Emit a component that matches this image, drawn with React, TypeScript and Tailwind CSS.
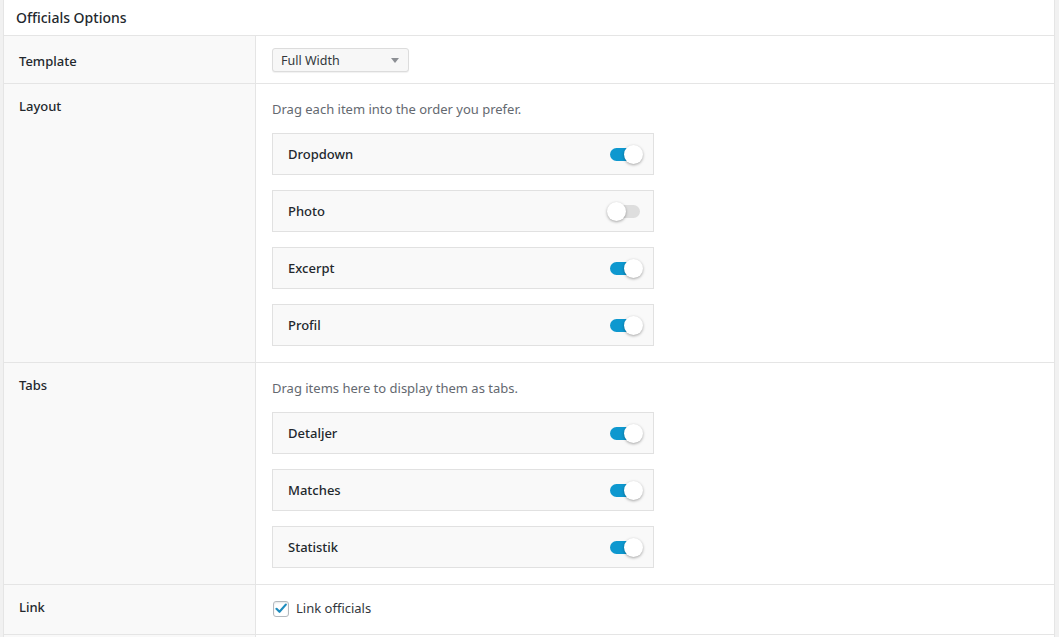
import React from "react";

type Item = { label: string; on: boolean };

const layoutItems: Item[] = [
  { label: "Dropdown", on: true },
  { label: "Photo", on: false },
  { label: "Excerpt", on: true },
  { label: "Profil", on: true },
];

const tabItems: Item[] = [
  { label: "Detaljer", on: true },
  { label: "Matches", on: true },
  { label: "Statistik", on: true },
];

function Toggle({ on }: { on: boolean }) {
  return (
    <div className="relative h-[18px] w-[34px]">
      <div
        className={
          on
            ? "absolute left-[1px] top-[3px] h-[13px] w-[30px] rounded-full bg-[#0e98cf]"
            : "absolute left-[1px] top-[3px] h-[13px] w-[30px] rounded-full bg-[#dedede]"
        }
      />
      <div
        className={
          on
            ? "absolute right-0 top-0 h-[19px] w-[19px] rounded-full bg-white shadow-[0_1px_3px_rgba(0,0,0,0.35)]"
            : "absolute left-[-2px] top-0 h-[19px] w-[19px] rounded-full bg-white shadow-[0_1px_3px_rgba(0,0,0,0.35)]"
        }
      />
    </div>
  );
}

function SortItem({ item }: { item: Item }) {
  return (
    <div className="flex h-[42px] w-[382px] items-center justify-between border border-[#e1e1e1] bg-[#f9f9f9] pl-[15px] pr-[10px]">
      <span className="pt-[1px] text-[13px] font-medium text-[#23282d]">{item.label}</span>
      <Toggle on={item.on} />
    </div>
  );
}

function Label({ children }: { children: React.ReactNode }) {
  return <span className="text-[13px] font-medium leading-5 text-[#23282d]">{children}</span>;
}

function SortableRow({ label, hint, items }: { label: string; hint: string; items: Item[] }) {
  return (
    <div className="flex border-b border-[#e5e5e5]">
      <div className="w-[252px] shrink-0 border-r border-[#e5e5e5] bg-[#f9f9f9] pl-[15px] pt-[9px]">
        <Label>{label}</Label>
      </div>
      <div className="flex-1 bg-white pb-[16px] pl-[16px] pt-[15px]">
        <p className="mb-[14px] text-[13px] leading-5 text-[#646970]">{hint}</p>
        <div className="flex flex-col gap-[15px]">
          {items.map((it) => (
            <SortItem key={it.label} item={it} />
          ))}
        </div>
      </div>
    </div>
  );
}

export default function App() {
  return (
    <div
      className="h-[637px] w-[1059px] overflow-hidden bg-[#f1f1f1] pl-[3px] pr-[4px]"
      style={{ fontFamily: '"Noto Sans", "Open Sans", Arial, sans-serif' }}
    >
      <div className="border-x border-[#e5e5e5] bg-white">
        {/* header */}
        <div className="flex h-[36px] items-center border-b border-[#e5e5e5] pl-[12px]">
          <h2 className="text-[14px] font-medium text-[#23282d]">Officials Options</h2>
        </div>

        {/* template */}
        <div className="flex h-[48px] border-b border-[#e5e5e5]">
          <div className="flex w-[252px] shrink-0 items-center border-r border-[#e5e5e5] bg-[#f9f9f9] pl-[15px] pt-[3px]">
            <Label>Template</Label>
          </div>
          <div className="flex flex-1 items-center bg-white pl-[16px] pt-[1px]">
            <div className="flex h-[24px] w-[137px] items-center justify-between rounded-[3px] border border-[#dcdcdc] bg-[#f7f7f7] pl-[8px] pr-[9px] shadow-[0_1px_1px_rgba(0,0,0,0.06)]">
              <span className="pt-[2px] text-[12.5px] leading-4 text-[#32373c]">Full Width</span>
              <svg width="8" height="5" viewBox="0 0 8 5">
                <path d="M0 0h8L4 5z" fill="#8c8f94" />
              </svg>
            </div>
          </div>
        </div>

        <SortableRow label="Layout" hint="Drag each item into the order you prefer." items={layoutItems} />
        <SortableRow label="Tabs" hint="Drag items here to display them as tabs." items={tabItems} />

        {/* link */}
        <div className="flex h-[50px] border-b border-[#e5e5e5]">
          <div className="w-[252px] shrink-0 border-r border-[#e5e5e5] bg-[#f9f9f9] pl-[15px] pt-[9px]">
            <Label>Link</Label>
          </div>
          <div className="flex flex-1 items-start bg-white pl-[17px] pt-[14px]">
            <label className="flex items-center gap-[7px]">
              <span className="flex h-[16px] w-[16px] items-center justify-center rounded-[3px] border border-[#b4b9be] bg-white shadow-[inset_0_1px_2px_rgba(0,0,0,0.1)]">
                <svg width="12" height="11" viewBox="0 0 12 11">
                  <path d="M1.5 5.8l3 3L10.8 1.6" fill="none" stroke="#1e8cbe" strokeWidth="2.2" strokeLinecap="round" strokeLinejoin="round" />
                </svg>
              </span>
              <span className="text-[13px] text-[#32373c]">Link officials</span>
            </label>
          </div>
        </div>

        {/* next row, cut off */}
        <div className="flex h-[60px]">
          <div className="w-[252px] shrink-0 border-r border-[#e5e5e5] bg-[#f9f9f9]" />
          <div className="flex-1 bg-white" />
        </div>
      </div>
    </div>
  );
}
